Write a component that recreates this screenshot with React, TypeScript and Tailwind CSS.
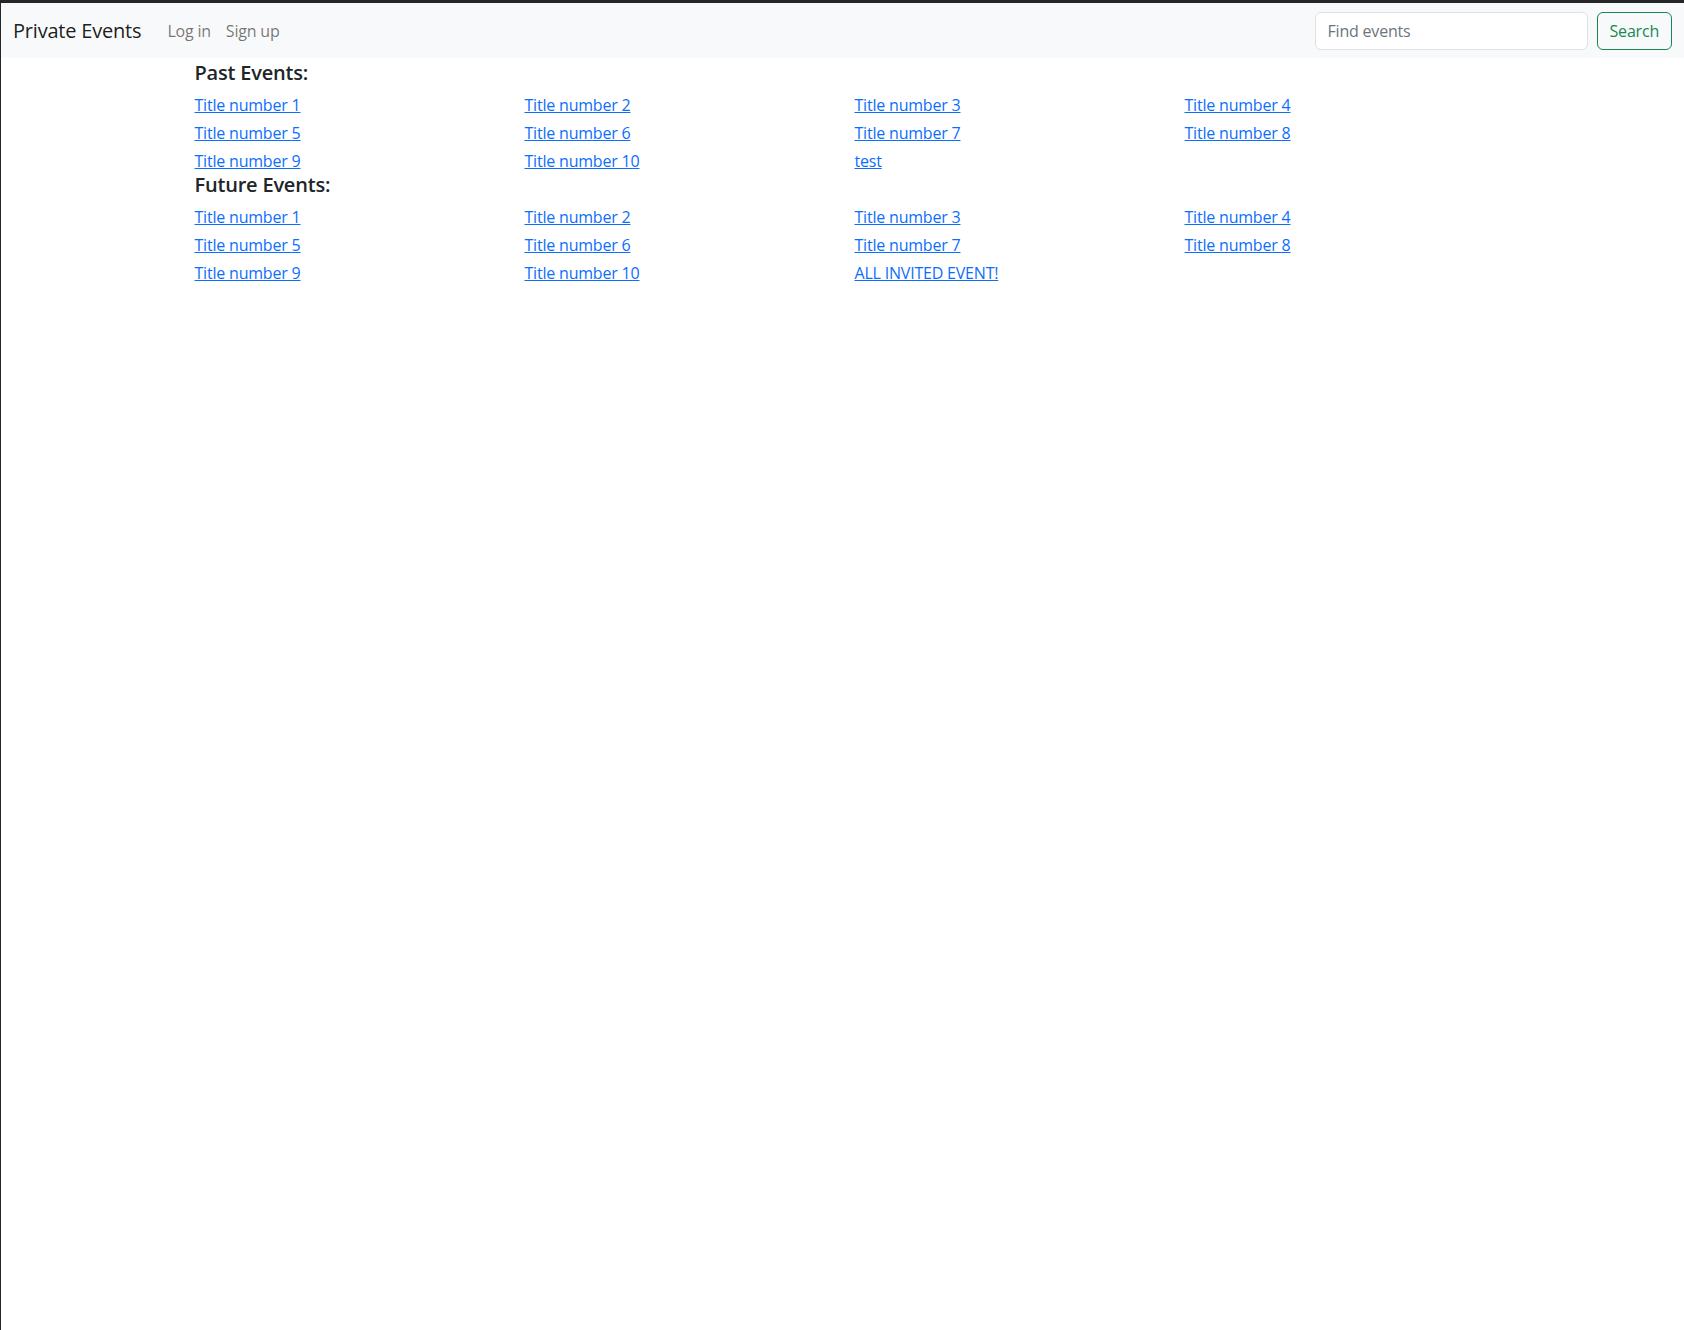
import React from "react";

const past = [
  "Title number 1", "Title number 2", "Title number 3", "Title number 4",
  "Title number 5", "Title number 6", "Title number 7", "Title number 8",
  "Title number 9", "Title number 10", "test",
];
const future = [
  "Title number 1", "Title number 2", "Title number 3", "Title number 4",
  "Title number 5", "Title number 6", "Title number 7", "Title number 8",
  "Title number 9", "Title number 10", "ALL INVITED EVENT!",
];

function Grid({ items }: { items: string[] }) {
  return (
    <div className="grid grid-cols-4 gap-y-1 -mx-3">
      {items.map((t, i) => (
        <div key={i} className="px-3 leading-6">
          <a href="#" className="text-[#0d6efd] underline text-base">{t}</a>
        </div>
      ))}
    </div>
  );
}

export default function App() {
  return (
    <div
      className="min-h-screen bg-white border-t-[3px] border-l border-[#262626] text-[#212529] tracking-[-0.2px]"
      style={{ fontFamily: '"Open Sans", "Noto Sans", sans-serif' }}
    >
      <nav className="bg-[#f8f9fa] h-[55px] flex items-center pl-3 pr-[12px]">
        <a href="#" className="text-[20px] text-black/90 mr-[26px]">Private Events</a>
        <a href="#" className="text-base text-black/55">Log in</a>
        <a href="#" className="text-base text-black/55 ml-[15px]">Sign up</a>
        <div className="ml-auto flex items-center gap-[9px]">
          <input
            placeholder="Find events"
            className="w-[273px] h-[38px] rounded-md border border-[#dee2e6] bg-white px-3 text-base text-[#212529] placeholder:text-[#6c757d] outline-none"
          />
          <button className="h-[38px] px-3 rounded-md border border-[#198754] text-[#198754] text-base">
            Search
          </button>
        </div>
      </nav>
      <div className="w-[1320px] mx-auto px-3 pt-[3px]">
        <h5 className="text-[20px] font-semibold leading-6 mb-2">Past Events:</h5>
        <Grid items={past} />
        <h5 className="text-[20px] font-semibold leading-6 mb-2">Future Events:</h5>
        <Grid items={future} />
      </div>
    </div>
  );
}
